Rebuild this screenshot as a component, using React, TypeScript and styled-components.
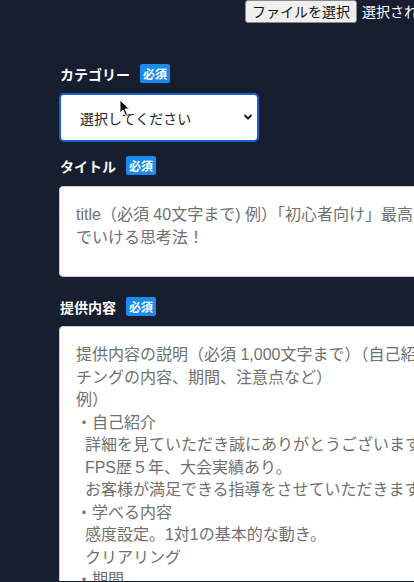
import styled, { createGlobalStyle } from "styled-components";

const GlobalStyle = createGlobalStyle`
  html, body {
    margin: 0;
    padding: 0;
    background: #171e2f;
    overflow: hidden;
  }
  body {
    font-family: "Liberation Sans", "Noto Sans CJK JP", sans-serif;
  }
`;

const Page = styled.div`
  width: 700px;
  height: 582px;
  padding-left: 59px;
  box-sizing: border-box;
  position: relative;
`;

const FileRow = styled.div`
  display: flex;
  align-items: center;
  gap: 5px;
  margin-left: 186px;
  margin-top: -1px;
  height: 24px;
`;

const FileButton = styled.button`
  font-family: "Liberation Sans", "Noto Sans CJK JP", sans-serif;
  font-size: 14px;
  height: 23px;
  padding: 0 6px;
  background: #efefef;
  color: #111;
  border: 1px solid #8a8a8a;
  border-radius: 3px;
`;

const FileStatus = styled.span`
  font-size: 14px;
  color: #fff;
  white-space: nowrap;
`;

const Field = styled.div<{ $top: number }>`
  margin-top: ${(p) => p.$top}px;
`;

const LabelRow = styled.div<{ $gap: number }>`
  display: flex;
  align-items: center;
  gap: 10px;
  height: 19px;
  margin-bottom: ${(p) => p.$gap}px;
`;

const Label = styled.span`
  font-family: "Noto Sans CJK JP", sans-serif;
  font-size: 14px;
  font-weight: 700;
  color: #fff;
  padding-left: 1px;
`;

const Badge = styled.span`
  font-family: "Noto Sans CJK JP", sans-serif;
  font-size: 12px;
  font-weight: 700;
  line-height: 19px;
  height: 19px;
  padding: 0 3px;
  background: #1a8cef;
  color: #fff;
  border-radius: 2px;
`;

const SelectWrap = styled.div`
  position: relative;
  width: 200px;
  height: 49px;
`;

const Select = styled.select`
  appearance: none;
  width: 100%;
  height: 100%;
  box-sizing: border-box;
  border: 2px solid #1d62d4;
  border-radius: 5px;
  box-shadow: inset 0 0 0 1px #ffffff;
  background: #fff;
  padding-left: 19px;
  font-family: "Noto Sans CJK JP", sans-serif;
  font-size: 14px;
  color: #222;
  outline: none;
`;

const Chevron = styled.svg`
  position: absolute;
  right: 6px;
  top: 20px;
  pointer-events: none;
`;

const TextArea = styled.textarea<{ $height: number }>`
  display: block;
  width: 620px;
  height: ${(p) => p.$height}px;
  box-sizing: border-box;
  padding: 17px 16px 16px;
  border: 1px solid #c9ccd2;
  border-radius: 4px;
  background: #fff;
  resize: none;
  font-family: "Liberation Sans", "Noto Sans CJK JP", sans-serif;
  font-size: 16px;
  line-height: 22.5px;
  overflow: hidden;
  &::placeholder {
    color: #707070;
  }
`;

const Cursor = styled.svg`
  position: absolute;
  left: 119px;
  top: 100px;
`;

const ind = "\u00a0\u00a0";

const contentPlaceholder = [
  "提供内容の説明（必須 1,000文字まで）（自己紹介、コー",
  "チングの内容、期間、注意点など）",
  "例）",
  "・自己紹介",
  ind + "詳細を見ていただき誠にありがとうございます。",
  ind + "FPS歴５年、大会実績あり。",
  ind + "お客様が満足できる指導をさせていただきます。",
  "・学べる内容",
  ind + "感度設定。1対1の基本的な動き。",
  ind + "クリアリング",
  "・期間",
  ind + "1ヶ月",
].join("\n");

export default function App() {
  return (
    <>
      <GlobalStyle />
      <Page>
        <FileRow>
          <FileButton>ファイルを選択</FileButton>
          <FileStatus>選択されていません</FileStatus>
        </FileRow>

        <Field $top={41}>
          <LabelRow $gap={10}>
            <Label>カテゴリー</Label>
            <Badge>必須</Badge>
          </LabelRow>
          <SelectWrap>
            <Select defaultValue="">
              <option value="">選択してください</option>
            </Select>
            <Chevron width="10" height="8" viewBox="0 0 10 8">
              <path d="M1.5 2 L5 5.5 L8.5 2" fill="none" stroke="#222" strokeWidth="2" />
            </Chevron>
          </SelectWrap>
        </Field>

        <Field $top={14}>
          <LabelRow $gap={11}>
            <Label>タイトル</Label>
            <Badge>必須</Badge>
          </LabelRow>
          <TextArea
            $height={91}
            placeholder={"title（必須 40文字まで) 例）「初心者向け」最高のメンタルで試合に臨ん\nでいける思考法！"}
          />
        </Field>

        <Field $top={20}>
          <LabelRow $gap={10}>
            <Label>提供内容</Label>
            <Badge>必須</Badge>
          </LabelRow>
          <TextArea $height={320} placeholder={contentPlaceholder} />
        </Field>

        <Cursor width="12" height="18" viewBox="0 0 12 18">
          <path d="M1 1 L1 14 L4 11 L6.5 16.5 L8.5 15.5 L6 10 L10.5 10 Z" fill="#000" stroke="#fff" strokeWidth="1" />
        </Cursor>
      </Page>
    </>
  );
}
